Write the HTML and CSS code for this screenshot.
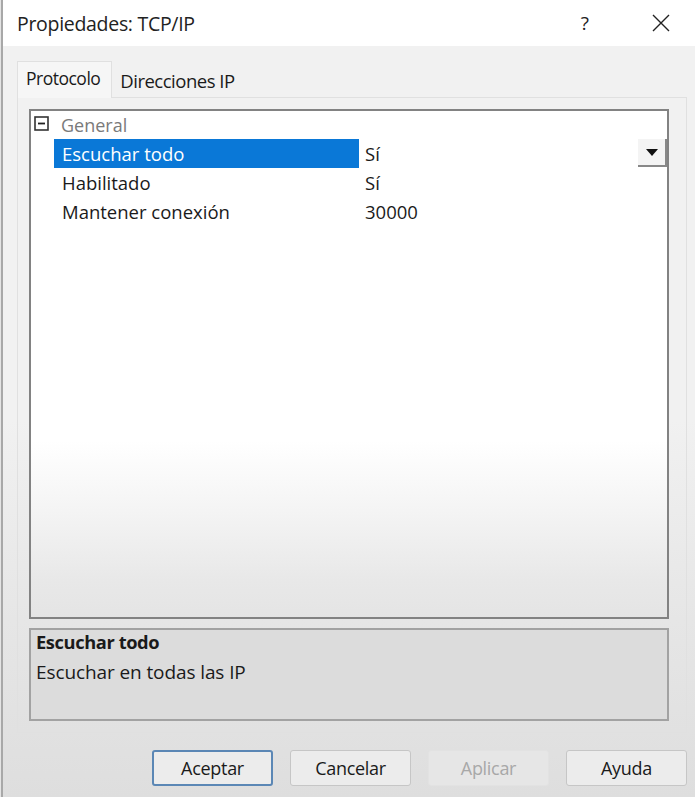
FILE: index.html
```html
<!DOCTYPE html>
<html lang="es">
<head>
<meta charset="utf-8">
<title>Propiedades: TCP/IP</title>
<link rel="stylesheet" href="styles.css">
</head>
<body>
<div class="window">
  <div class="titlebar">
    <span class="title">Propiedades: TCP/IP</span>
    <div class="controls">
      <span class="help">?</span>
      <svg class="close" width="18" height="18" viewBox="0 0 18 18"><path d="M1 1 L17 17 M17 1 L1 17" stroke="#222" stroke-width="1.4" fill="none"/></svg>
    </div>
  </div>
  <div class="body">
    <div class="tabs">
      <div class="tab active">Protocolo</div>
      <div class="tab">Direcciones IP</div>
    </div>
    <div class="panel">
      <div class="grid">
        <div class="cat">
          <svg class="toggle" width="15" height="15" viewBox="0 0 15 15"><rect x="1" y="1" width="13" height="13" fill="#fff" stroke="#333" stroke-width="1.6"/><path d="M4 7.5 H11" stroke="#222" stroke-width="1.8"/></svg>
          <span class="cat-name">General</span>
        </div>
        <div class="row selected">
          <div class="name">Escuchar todo</div>
          <div class="value">Sí<span class="drop"><svg width="12" height="7" viewBox="0 0 12 7"><path d="M0 0 H12 L6 7 Z" fill="#111"/></svg></span></div>
        </div>
        <div class="row">
          <div class="name">Habilitado</div>
          <div class="value">Sí</div>
        </div>
        <div class="row">
          <div class="name">Mantener conexión</div>
          <div class="value">30000</div>
        </div>
      </div>
      <div class="desc">
        <div class="desc-title">Escuchar todo</div>
        <div class="desc-text">Escuchar en todas las IP</div>
      </div>
    </div>
    <div class="buttons">
      <button class="btn default">Aceptar</button>
      <button class="btn">Cancelar</button>
      <button class="btn disabled">Aplicar</button>
      <button class="btn">Ayuda</button>
    </div>
  </div>
</div>
</body>
</html>
```
FILE: styles.css
```css
* { box-sizing: border-box; }
html, body { margin: 0; padding: 0; }
body {
  width: 695px;
  height: 797px;
  overflow: hidden;
  font-family: "Open Sans", "Noto Sans", sans-serif;
  color: #1a1a1a;
  background: #e4e4e4;
}
.window {
  height: 797px;
  margin-left: 1px;
  border-left: 2px solid #a8a8a8;
  display: flex;
  flex-direction: column;
  background: linear-gradient(#f1f1f1 0px, #f1f1f1 420px, #e6e6e6 620px, #dedede 797px);
}
.titlebar {
  height: 46px;
  background: #fff;
  display: flex;
  align-items: center;
  justify-content: space-between;
  padding: 0 25px 0 14px;
}
.title {
  font-size: 19.5px;
  letter-spacing: -0.3px;
  color: #222;
}
.controls {
  display: flex;
  align-items: center;
  gap: 63px;
}
.help {
  font-size: 19px;
  color: #222;
}
.close { display: block; }
.body {
  flex: 1;
  display: flex;
  flex-direction: column;
  padding: 14px 8px 0 14px;
}
.tabs {
  display: flex;
  align-items: flex-end;
  height: 37px;
  position: relative;
  z-index: 1;
}
.tab {
  font-size: 18.5px;
  letter-spacing: -0.5px;
  padding: 0 8px;
  height: 33px;
  display: flex;
  align-items: center;
  color: #1a1a1a;
}
.tab.active {
  height: 37px;
  font-size: 17.5px;
  padding: 0 11px 4px 8px;
  background: #f6f6f6;
  border: 1px solid #e0e0e0;
  border-bottom: none;
  margin-bottom: -1px;
}
.panel {
  border: 1px solid #e0e0e0;
  padding: 11px 17px 0 11px;
  height: 636px;
}
.grid {
  height: 510px;
  border: 2px solid #828282;
  background: linear-gradient(#ffffff 0px, #ffffff 330px, #f4f4f4 400px, #e8e8e8 470px, #e4e4e4 510px);
}
.cat {
  height: 28px;
  display: flex;
  align-items: center;
  padding-left: 3px;
  gap: 12px;
}
.toggle { display: block; margin-top: -4px; }
.cat-name {
  font-size: 18px;
  color: #7a7a7a;
}
.row {
  height: 29px;
  display: flex;
  padding-left: 23px;
  font-size: 18.5px;
}
.name {
  width: 305px;
  padding-left: 8px;
  display: flex;
  align-items: center;
}
.value {
  flex: 1;
  padding-left: 6px;
  display: flex;
  align-items: center;
  position: relative;
}
.row.selected .name {
  background: #0a78d7;
  color: #fff;
}
.drop {
  position: absolute;
  right: 0;
  top: 0;
  width: 29px;
  height: 28px;
  background: #f4f4f4;
  border-right: 2px solid #888;
  border-bottom: 2px solid #888;
  display: flex;
  align-items: center;
  justify-content: center;
}
.drop svg { display: block; }
.desc {
  margin-top: 9px;
  height: 93px;
  border: 2px solid #a2a2a2;
  background: #dcdcdc;
  padding: 1px 5px;
}
.desc-title {
  font-size: 18.3px;
  font-weight: bold;
  letter-spacing: -0.4px;
  line-height: 22px;
}
.desc-text {
  margin-top: 8px;
  font-size: 19px;
  letter-spacing: -0.1px;
  line-height: 22px;
}
.buttons {
  display: flex;
  justify-content: flex-end;
  gap: 17px;
  padding-top: 17px;
}
.btn {
  width: 121px;
  height: 36px;
  font-family: "Open Sans", "Noto Sans", sans-serif;
  font-size: 18px;
  letter-spacing: -0.3px;
  color: #1a1a1a;
  background: #ececec;
  border: 1px solid #c6c6c6;
  border-radius: 3px;
}
.btn.default {
  border: 2px solid #5b87b5;
}
.btn.disabled {
  color: #a8a8a8;
  border-color: #e2e2e2;
  background: #e6e6e6;
}
```
